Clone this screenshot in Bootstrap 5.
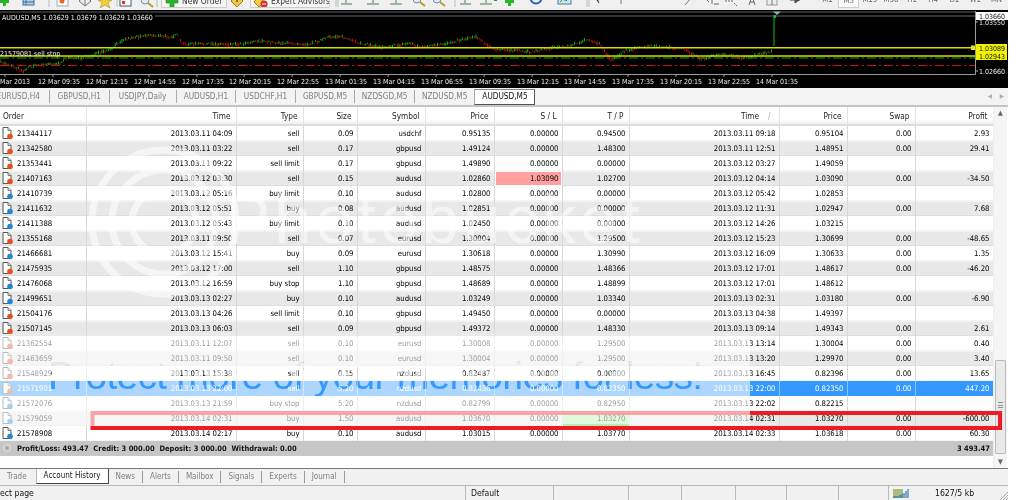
<!DOCTYPE html>
<html lang="en">
<head>
<meta charset="utf-8">
<title>AUDUSD,M5</title>
<link href="https://cdn.jsdelivr.net/npm/bootstrap@5.3.0/dist/css/bootstrap.min.css" rel="stylesheet">
<style>
html,body{margin:0;height:500px;overflow:hidden;background:#fff}
body{font-family:"DejaVu Sans Condensed","DejaVu Sans",sans-serif;font-size:7.7px;color:#000;font-stretch:condensed}
.mt-app{width:1008px;height:500px;filter:blur(.3px);background:#f1f1f1}
/* toolbar */
.mt-tools{height:10px;overflow:hidden;align-items:flex-end;background:#f0f0f0}
.mt-tools svg{display:block;flex:none;height:16px}
.tb-a{width:161px}.tb-b{width:23px}.tb-c{width:485px}
.mt-tools .tb-btn.btn{flex:none;height:14px;margin-bottom:2px;border:1px solid #ccc;border-radius:1px;background:#f6f6f6;padding:0 0 0 20px;font:8.4px/8px "DejaVu Sans Condensed",sans-serif;color:#333;text-align:left;position:relative;white-space:nowrap;overflow:hidden}
.tb-new.btn{width:66px}.tb-exp.btn{width:80px}
.tb-btn svg{position:absolute;left:2px;top:0;height:14px;width:16px}
.tb-tf{flex:none;width:192px;height:16px;padding-left:2px;font-size:7.7px;line-height:11px;color:#666}
.tb-tf span{width:21.5px;height:14px;text-align:center;display:block}
.tb-tf .tf-on{background:#fafafa;border:1px solid #ccc}
/* chart */
.mt-chart{display:block;width:1008px;height:78px;background:#000}
.cht{font-family:"DejaVu Sans Condensed","DejaVu Sans",sans-serif;font-size:7px;fill:#eee}
.cht-k{fill:#111}
/* chart tabs */
.mt-ctabs{height:17px;background:#f3f3f3;border:0;flex-wrap:nowrap}
.mt-ctabs .nav-link,.mt-btabs .nav-link{padding:0;color:#808080;font-size:8.2px;line-height:13px;border:0;border-radius:0;background:none;text-align:center;white-space:nowrap}
.mt-ctabs .nav-item{width:59.6px;height:13px;margin-top:2px;border-right:1px solid #aaa;overflow:hidden}
.mt-ctabs .nav-item.tab-first{width:50px;display:flex;justify-content:flex-end;padding-right:9px}
.mt-ctabs .nav-item.tab-wide{width:67px}
.mt-ctabs .nav-item.tab-last{border-right:0;width:59.5px}
.mt-ctabs .nav-item.tab-on{width:61px;height:16px;margin-top:1px;background:#fff;border:1px solid #555;border-top-color:#888;border-left-color:#aaa}
.mt-ctabs .tab-on .nav-link{color:#111;line-height:13px}
.ct-arrows{color:#aaa;font-size:6px;line-height:15px;gap:8px;padding-right:4px}
/* list */
.mt-list{height:364px;border-top:2px solid #c4c4c4;border-bottom:1px solid #777;background:#fff;position:relative}
.mt-wrap{width:993px;flex:none}
.mt-grid{width:993px;margin:0;table-layout:fixed;border-collapse:collapse}
.mt-grid>thead>tr>th{height:18px;padding:0 5px 2px 3px;font-weight:400;text-align:right;color:#222;font-size:8.2px;background:linear-gradient(#fff 70%,#f0f0f0);border-right:1px solid #e4e4e4;border-bottom:2px solid #dcdcdc;box-shadow:none;white-space:nowrap}
.mt-grid>thead>tr>th:first-child{text-align:left}
.sort-mk{margin:0 3px 0 9px;color:#aaa}
.mt-grid>tbody>tr>td{height:15px;padding:0 3px;line-height:15px;text-align:right;white-space:nowrap;overflow:hidden;background:#fff;color:#000;border:0;border-right:1px solid #d8d8d8;box-shadow:inset 0 -1px 0 #f4f4f4}
.mt-grid>tbody>tr:nth-child(even)>td{background:#e8e8e8;box-shadow:inset 0 1px 0 #f2f2f2,inset 0 -1px 0 #dedede}
.mt-grid>tbody>tr>td:first-child{text-align:left;padding-left:2px}
.mt-grid>tbody>tr>td.c-sl{background:#ff9f9f;box-shadow:inset 0 0 0 1px #fff;color:#000}
.mt-grid>tbody>tr>td.c-tp{background:#b4f2a8;box-shadow:inset 0 0 0 1px #fff}
.mt-grid>tbody>tr>td.c-tpl{background:#b4f2a8;box-shadow:inset 0 -2px 0 #4fce4f}
.mt-grid>tbody>tr.r-sel>td{background:#3399ff;color:#fff;box-shadow:none;border-right-color:#8cc4ff}
.mt-grid>tbody>tr.r-sum>td{background:#c6c6c6;box-shadow:none;border:0;font-weight:700;font-size:7.5px;color:#111;text-align:right}
.mt-grid>tbody>tr.r-sum>td:first-child{text-align:left}
.o-ic{display:inline-block;width:11px;height:14px;vertical-align:top;margin-right:4px}
.o-dot{display:inline-block;width:8px;height:8px;border-radius:50%;background:#aaa;border:2px solid #d4d4d4;vertical-align:-1px;margin:0 6px 0 1px}
.w-o{width:86px}.w-t{width:150px}.w-ty{width:67px}.w-sz{width:54px}.w-sy{width:68px}.w-p{width:69px}.w-sl{width:68px}.w-tp{width:67px}.w-p2{width:68px}.w-sw{width:68px}.w-pr{width:78px}
.mt-scroll{width:14px;flex:none;background:#f5f5f5;border-left:1px solid #eee;color:#666;font-size:7px;line-height:12px;text-align:center}
.sc-thumb{height:94px;margin:0 1px 2px;border:1px solid #bbb;border-radius:1px;background:#e9e9e9;line-height:90px;font-size:8px;color:#777}
.mt-over{position:absolute;left:0;top:-2px;width:1008px;height:364px;pointer-events:none}
.ov-mark{font-family:"Liberation Sans",sans-serif;font-size:68px;fill:#fff;fill-opacity:.5}
.ov-hole{font-family:"Liberation Sans",sans-serif;font-size:39px;fill:#000}
/* bottom tabs */
.mt-btabs{height:16px;background:#f1f1f1;flex-wrap:nowrap;padding-left:7px;border:0}
.mt-btabs .nav-item{flex:none;height:12px;margin-top:2px;padding:0 7px;border-right:1px solid #999}
.mt-btabs .nav-link{line-height:12px;font-size:8px}
.mt-btabs .bt-plain{border:0;padding:0 9px 0 0}
.mt-btabs .bt-on{height:15px;margin-top:0;padding:0 7px;background:#fff;border:1px solid #444;border-top:0;border-left-color:#bbb}
.mt-btabs .bt-on .nav-link{color:#222;line-height:13px}
/* status */
.mt-status{height:15px;border-top:1px solid #b8b8b8;background:#f1f1f1;font-size:8.6px;line-height:14px;color:#111;overflow:hidden}
.mt-status>div{flex:none;height:14px;border-right:1px solid #bbb;padding-left:5px;white-space:nowrap}
.st-a{width:466px}.st-a.px-0{padding-left:0}.st-b{width:88px}.st-c{width:75px}.st-d{width:53px}.st-e{width:54px}.st-f{width:51px}.st-g{width:52px}.st-h{width:50px}
.mt-status>.st-i{width:119px;border:0;padding-left:4px;position:relative}
.st-i svg{display:block;width:16px;height:11px;margin-top:2px}
.st-kb{padding-left:26px}
.st-i .st-grip{position:absolute;right:0;bottom:0;width:9px;height:9px;margin:0}
</style>
</head>
<body>
<div class="mt-app d-flex flex-column">

  <div class="mt-tools d-flex">
    <svg class="tb-a" viewBox="0 -6 161 16" aria-hidden="true">
      <path d="M3-3h3v3h3v3h-3v3h-3v-3h-3v-3h3z" fill="#27b52c"/>
      <rect x="23" y="-3" width="11" height="8" fill="#b9cfe6" stroke="#3d6a99"/><path d="M26-3v8M23 2h11" stroke="#3d6a99"/>
      <path d="M49-6v13M117-6v13M157-6v13" stroke="#bbb"/>
      <rect x="57" y="-4" width="11" height="10" fill="#fff" stroke="#9ab"/><circle cx="62" cy="1" r="2.5" fill="#e8622a"/>
      <path d="M85-4l6 5-6 5-6-5z" fill="#eee" stroke="#777"/><path d="M85-4v10" stroke="#777"/>
      <path d="M105-5l2 5h5l-4 3 2 5-5-3-5 3 2-5-4-3h5z" fill="#f2cf3b" stroke="#b8902a" stroke-width=".6"/>
      <rect x="120" y="-4" width="11" height="10" fill="#fff" stroke="#456"/><path d="M121-1h9" stroke="#3d6cc0" stroke-width="2"/><rect x="122" y="1" width="3" height="3" fill="#d33"/>
      <circle cx="145" cy="0" r="4" fill="#dcecff" stroke="#7a8ca0"/><path d="M148 3l5 4" stroke="#c49a2a" stroke-width="2"/>
    </svg>
    <button type="button" class="btn tb-btn tb-new"><svg viewBox="0 0 16 14" aria-hidden="true"><path d="M6 0h4v4h4v4h-4v4h-4v-4h-4v-4h4z" fill="#27b52c" stroke="#178a1c" stroke-width=".6"/></svg>New Order</button>
    <svg class="tb-b" viewBox="0 -6 23 16" aria-hidden="true">
      <path d="M10-5l6 6-6 6-6-6z" fill="#f0c93a" stroke="#9a7a20"/><path d="M10-2v4" stroke="#634" stroke-width="1.4"/>
    </svg>
    <button type="button" class="btn tb-btn tb-exp"><svg viewBox="0 0 16 14" aria-hidden="true"><path d="M6 1l6 7-6 4-5-5z" fill="#f2cf3b" stroke="#9a7a20"/><circle cx="11" cy="9" r="3.6" fill="#d92b2b"/><path d="M9 9h4" stroke="#fff"/></svg>Expert Advisors</button>
    <svg class="tb-c" viewBox="330 -6 485 16" aria-hidden="true">
      <g stroke="#bbb"><path d="M336-6v13M338-6v13M455-6v13M587-6v13M589-6v13"/></g>
      <g fill="none" stroke="#4a7a4a">
        <path d="M346-5v8M341 4h11"/><path d="M373-5v8M367 4h12"/><path d="M396-5v8M390 4h12"/><path d="M465-5v8M460 4h11"/><path d="M486-5v8M480 4h12"/>
      </g>
      <path d="M371-1h4M494 0h3" stroke="#2a9b2a" stroke-width="2"/>
      <g fill="#dcecff" stroke="#7a8ca0"><circle cx="417" cy="-1" r="4"/><circle cx="437" cy="-1" r="4"/></g>
      <path d="M420 2l5 4M440 2l5 4" stroke="#c49a2a" stroke-width="2"/>
      <path d="M508-3h3v3h3v3h-3v3h-3v-3h-3v-3h3z" fill="#27b52c"/>
      <circle cx="536" cy="-2" r="5.5" fill="none" stroke="#2c62b8" stroke-width="2"/>
      <rect x="558" y="-4" width="13" height="8" fill="#cfe3ee" stroke="#4b7ba0"/><path d="M560 2l3-3 3 2 3-3" stroke="#3a9a4a" fill="none"/>
      <path d="M595-6l4 6-2 0 2 3" fill="#333" stroke="#333"/>
      <path d="M621-4v8M645-4v4" stroke="#777"/>
      <path d="M685 5l6-7" stroke="#777"/>
      <path d="M704-3l5 5M712-3v7M714 4h5" stroke="#666" fill="none"/>
      <path d="M725 1h8M734 3l3 3" stroke="#666" stroke-dasharray="2 1" fill="none"/>
      <path d="M749 5l3-9 3 9M750 2h4" stroke="#666" fill="none"/>
      <rect x="767" y="-4" width="10" height="9" fill="#eee" stroke="#999"/><path d="M772-4v9" stroke="#776"/>
      <path d="M790 0h10M795-3l4 3-4 3z" stroke="#444" fill="#555"/>
    </svg>
    <div class="tb-tf d-flex"><span>M1</span><span class="tf-on">M5</span><span>M15</span><span>M30</span><span>H1</span><span>H4</span><span>D1</span><span>W1</span><span>MN</span></div>
  </div>

  <svg class="mt-chart" viewBox="0 10 1008 78" role="img" aria-label="AUDUSD M5 chart">
    <path d="M0 12H975" stroke="#7b7b7b" stroke-width=".8"/>
    <path d="M155 16H975" stroke="#5a6a74" stroke-width="1.2"/>
    <g id="candles"></g>
    <path d="M774 46V15" stroke="#0ca010" stroke-width="1.2"/>
    <path d="M774 18h2v-3h-2z" fill="#15c41a"/>
    <path d="M773 11.5h8l-4 3.5z" fill="#9aa"/>
    <path d="M0 58H975" stroke="#0aa00a" stroke-width="1" stroke-dasharray="9 3 2 3"/>
    <path d="M0 65.5H975" stroke="#c01818" stroke-width="1" stroke-dasharray="9 3 2 3"/>
    <path d="M0 47.7H975M0 56H975" stroke="#d8d800" stroke-width="1.6"/>
    <rect x="971" y="45.500" width="5" height="4.500" fill="#e8e800"/>
    <path d="M975.500 11V74.500H0" fill="none" stroke="#9a9a9a"/>
    <path d="M975 16h3M975 22h3M975 71h3" stroke="#aaa"/>
    <g stroke="#999"><path d="M5 74v3M53 74v3M101 74v3M149 74v3M197 74v3M244 74v3M292 74v3M340 74v3M388 74v3M436 74v3M484 74v3M532 74v3M579 74v3M628 74v3M676 74v3M724 74v3M772 74v3"/></g>
    <text class="cht" x="2" y="20">AUDUSD,M5  1.03629 1.03679 1.03629 1.03660</text>
    <text class="cht" x="0" y="56">21579081 sell stop</text>
    <rect x="976" y="12" width="32" height="8" fill="#fff"/>
    <text class="cht cht-k" x="979" y="18.500">1.03660</text>
    <text class="cht" x="979" y="25">1.03550</text>
    <rect x="976" y="44" width="31" height="16" fill="#f2f200"/>
    <text class="cht cht-k" x="979" y="50.500">1.03089</text>
    <text class="cht cht-k" x="979" y="59">1.02943</text>
    <text class="cht" x="979" y="74">1.02660</text>
    <g>
      <text class="cht" x="0" y="84">Mar 2013</text><text class="cht" x="38" y="84">12 Mar 09:35</text><text class="cht" x="86" y="84">12 Mar 12:15</text><text class="cht" x="134" y="84">12 Mar 14:55</text><text class="cht" x="182" y="84">12 Mar 17:35</text><text class="cht" x="229" y="84">12 Mar 20:15</text><text class="cht" x="277" y="84">12 Mar 22:55</text><text class="cht" x="325" y="84">13 Mar 01:35</text><text class="cht" x="373" y="84">13 Mar 04:15</text><text class="cht" x="421" y="84">13 Mar 06:55</text><text class="cht" x="469" y="84">13 Mar 09:35</text><text class="cht" x="517" y="84">13 Mar 12:15</text><text class="cht" x="564" y="84">13 Mar 14:55</text><text class="cht" x="612" y="84">13 Mar 17:35</text><text class="cht" x="660" y="84">13 Mar 20:15</text><text class="cht" x="708" y="84">13 Mar 22:55</text><text class="cht" x="756" y="84">14 Mar 01:35</text>
    </g>
  </svg>

  <ul class="nav mt-ctabs">
    <li class="nav-item tab-first"><a class="nav-link" href="#">EURUSD,H4</a></li>
    <li class="nav-item"><a class="nav-link" href="#">GBPUSD,H1</a></li>
    <li class="nav-item tab-wide"><a class="nav-link" href="#">USDJPY,Daily</a></li>
    <li class="nav-item"><a class="nav-link" href="#">AUDUSD,H1</a></li>
    <li class="nav-item"><a class="nav-link" href="#">USDCHF,H1</a></li>
    <li class="nav-item"><a class="nav-link" href="#">GBPUSD,M5</a></li>
    <li class="nav-item"><a class="nav-link" href="#">NZDSGD,M5</a></li>
    <li class="nav-item tab-last"><a class="nav-link" href="#">NZDUSD,M5</a></li>
    <li class="nav-item tab-on"><a class="nav-link active" href="#">AUDUSD,M5</a></li>
    <li class="ms-auto d-flex ct-arrows"><span>&#9664;</span><span>&#9654;</span></li>
  </ul>

  <svg width="0" height="0" class="position-absolute" aria-hidden="true">
    <symbol id="doc-r" viewBox="0 0 11 14"><path d="M1 1.500h5l3 3v8h-8z" fill="#fff" stroke="#555"/><path d="M6 1.500v3h3" fill="#ddd" stroke="#777"/><circle cx="8" cy="10.500" r="2.800" fill="#e4511f"/></symbol>
    <symbol id="doc-b" viewBox="0 0 11 14"><path d="M1 1.500h5l3 3v8h-8z" fill="#fff" stroke="#555"/><path d="M6 1.500v3h3" fill="#ddd" stroke="#777"/><circle cx="8" cy="10.500" r="2.800" fill="#1f86d8"/></symbol>
  </svg>

  <div class="mt-list d-flex">
    <div class="mt-wrap">
      <table class="table mt-grid">
        <colgroup><col class="w-o"><col class="w-t"><col class="w-ty"><col class="w-sz"><col class="w-sy"><col class="w-p"><col class="w-sl"><col class="w-tp"><col class="w-t"><col class="w-p2"><col class="w-sw"><col class="w-pr"></colgroup>
        <thead><tr><th>Order</th><th>Time</th><th>Type</th><th>Size</th><th>Symbol</th><th>Price</th><th>S / L</th><th>T / P</th><th>Time<span class="sort-mk">/</span></th><th>Price</th><th>Swap</th><th>Profit</th></tr></thead>
        <tbody>
<tr><td><svg class="o-ic"><use href="#doc-r"/></svg>21344117</td><td>2013.03.11 04:09</td><td>sell</td><td>0.09</td><td>usdchf</td><td>0.95135</td><td>0.00000</td><td>0.94500</td><td>2013.03.11 09:18</td><td>0.95104</td><td>0.00</td><td>2.93</td></tr>
<tr><td><svg class="o-ic"><use href="#doc-r"/></svg>21342580</td><td>2013.03.11 03:22</td><td>sell</td><td>0.17</td><td>gbpusd</td><td>1.49124</td><td>0.00000</td><td>1.48300</td><td>2013.03.11 12:51</td><td>1.48951</td><td>0.00</td><td>29.41</td></tr>
<tr><td><svg class="o-ic"><use href="#doc-r"/></svg>21353441</td><td>2013.03.11 09:22</td><td>sell limit</td><td>0.17</td><td>gbpusd</td><td>1.49890</td><td>0.00000</td><td>0.00000</td><td>2013.03.12 03:27</td><td>1.49059</td><td></td><td></td></tr>
<tr><td><svg class="o-ic"><use href="#doc-r"/></svg>21407163</td><td>2013.03.12 03:30</td><td>sell</td><td>0.15</td><td>audusd</td><td>1.02860</td><td class="c-sl">1.03090</td><td>1.02700</td><td>2013.03.12 04:14</td><td>1.03090</td><td>0.00</td><td>-34.50</td></tr>
<tr><td><svg class="o-ic"><use href="#doc-b"/></svg>21410739</td><td>2013.03.12 05:16</td><td>buy limit</td><td>0.10</td><td>audusd</td><td>1.02800</td><td>0.00000</td><td>0.00000</td><td>2013.03.12 05:42</td><td>1.02853</td><td></td><td></td></tr>
<tr><td><svg class="o-ic"><use href="#doc-b"/></svg>21411632</td><td>2013.03.12 05:51</td><td>buy</td><td>0.08</td><td>audusd</td><td>1.02851</td><td>0.00000</td><td>0.00000</td><td>2013.03.12 11:31</td><td>1.02947</td><td>0.00</td><td>7.68</td></tr>
<tr><td><svg class="o-ic"><use href="#doc-b"/></svg>21411388</td><td>2013.03.12 05:43</td><td>buy limit</td><td>0.10</td><td>audusd</td><td>1.02450</td><td>0.00000</td><td>0.00000</td><td>2013.03.12 14:26</td><td>1.03215</td><td></td><td></td></tr>
<tr><td><svg class="o-ic"><use href="#doc-r"/></svg>21355168</td><td>2013.03.11 09:50</td><td>sell</td><td>0.07</td><td>eurusd</td><td>1.30004</td><td>0.00000</td><td>1.29500</td><td>2013.03.12 15:23</td><td>1.30699</td><td>0.00</td><td>-48.65</td></tr>
<tr><td><svg class="o-ic"><use href="#doc-b"/></svg>21466681</td><td>2013.03.12 15:41</td><td>buy</td><td>0.09</td><td>eurusd</td><td>1.30618</td><td>0.00000</td><td>1.30990</td><td>2013.03.12 16:09</td><td>1.30633</td><td>0.00</td><td>1.35</td></tr>
<tr><td><svg class="o-ic"><use href="#doc-r"/></svg>21475935</td><td>2013.03.12 17:00</td><td>sell</td><td>1.10</td><td>gbpusd</td><td>1.48575</td><td>0.00000</td><td>1.48366</td><td>2013.03.12 17:01</td><td>1.48617</td><td>0.00</td><td>-46.20</td></tr>
<tr><td><svg class="o-ic"><use href="#doc-b"/></svg>21476068</td><td>2013.03.12 16:59</td><td>buy stop</td><td>1.10</td><td>gbpusd</td><td>1.48689</td><td>0.00000</td><td>1.48899</td><td>2013.03.12 17:01</td><td>1.48612</td><td></td><td></td></tr>
<tr><td><svg class="o-ic"><use href="#doc-b"/></svg>21499651</td><td>2013.03.13 02:27</td><td>buy</td><td>0.10</td><td>audusd</td><td>1.03249</td><td>0.00000</td><td>1.03340</td><td>2013.03.13 02:31</td><td>1.03180</td><td>0.00</td><td>-6.90</td></tr>
<tr><td><svg class="o-ic"><use href="#doc-r"/></svg>21504176</td><td>2013.03.13 04:26</td><td>sell limit</td><td>0.10</td><td>gbpusd</td><td>1.49450</td><td>0.00000</td><td>0.00000</td><td>2013.03.13 04:38</td><td>1.49397</td><td></td><td></td></tr>
<tr><td><svg class="o-ic"><use href="#doc-r"/></svg>21507145</td><td>2013.03.13 06:03</td><td>sell</td><td>0.09</td><td>gbpusd</td><td>1.49372</td><td>0.00000</td><td>1.48330</td><td>2013.03.13 09:14</td><td>1.49343</td><td>0.00</td><td>2.61</td></tr>
<tr><td><svg class="o-ic"><use href="#doc-r"/></svg>21362554</td><td>2013.03.11 12:07</td><td>sell</td><td>0.10</td><td>eurusd</td><td>1.30008</td><td>0.00000</td><td>1.29500</td><td>2013.03.13 13:14</td><td>1.30004</td><td>0.00</td><td>0.40</td></tr>
<tr><td><svg class="o-ic"><use href="#doc-r"/></svg>21463659</td><td>2013.03.11 09:50</td><td>sell</td><td>0.10</td><td>eurusd</td><td>1.30004</td><td>0.00000</td><td>1.29500</td><td>2013.03.13 13:20</td><td>1.29970</td><td>0.00</td><td>3.40</td></tr>
<tr><td><svg class="o-ic"><use href="#doc-r"/></svg>21548929</td><td>2013.03.13 15:38</td><td>sell</td><td>0.15</td><td>nzdusd</td><td>0.82487</td><td>0.00000</td><td>0.00000</td><td>2013.03.13 16:45</td><td>0.82396</td><td>0.00</td><td>13.65</td></tr>
<tr class="r-sel"><td><svg class="o-ic"><use href="#doc-r"/></svg>21571901</td><td>2013.03.13 22:00</td><td>sell</td><td>5.20</td><td>nzdusd</td><td>0.82436</td><td>0.00000</td><td class="c-tp">0.82350</td><td>2013.03.13 22:00</td><td>0.82350</td><td>0.00</td><td>447.20</td></tr>
<tr><td><svg class="o-ic"><use href="#doc-b"/></svg>21572076</td><td>2013.03.13 21:59</td><td>buy stop</td><td>5.20</td><td>nzdusd</td><td>0.82799</td><td>0.00000</td><td>0.82950</td><td>2013.03.13 22:02</td><td>0.82215</td><td></td><td></td></tr>
<tr><td><svg class="o-ic"><use href="#doc-b"/></svg>21579059</td><td>2013.03.14 02:31</td><td>buy</td><td>1.50</td><td>audusd</td><td>1.03670</td><td>0.00000</td><td class="c-tpl">1.03270</td><td>2013.03.14 02:31</td><td>1.03270</td><td>0.00</td><td>-600.00</td></tr>
<tr><td><svg class="o-ic"><use href="#doc-b"/></svg>21578908</td><td>2013.03.14 02:17</td><td>buy</td><td>0.10</td><td>audusd</td><td>1.03015</td><td>0.00000</td><td>1.03770</td><td>2013.03.14 02:33</td><td>1.03618</td><td>0.00</td><td>60.30</td></tr>
<tr class="r-sum"><td colspan="11"><span class="o-dot"></span>Profit/Loss: 493.47 &nbsp;Credit: 3 000.00 &nbsp;Deposit: 3 000.00 &nbsp;Withdrawal: 0.00</td><td>3 493.47</td></tr>
        </tbody>
      </table>
    </div>
    <div class="mt-scroll d-flex flex-column">
      <div>&#9650;</div>
      <div class="flex-grow-1"></div>
      <div class="sc-thumb">&#9776;</div>
      <div>&#9660;</div>
    </div>
    <svg class="mt-over" viewBox="0 105 1008 364" aria-hidden="true">
      <defs>
        <linearGradient id="ov-fade" x1="0" y1="333" x2="0" y2="426" gradientUnits="userSpaceOnUse">
          <stop offset="0" stop-color="#fff" stop-opacity="0"/><stop offset=".05" stop-color="#fff" stop-opacity=".6"/><stop offset="1" stop-color="#fff" stop-opacity=".6"/>
        </linearGradient>
        <mask id="ov-mask" maskUnits="userSpaceOnUse" x="0" y="105" width="1008" height="364">
          <rect x="0" y="105" width="1008" height="364" fill="#fff"/>
          <text class="ov-hole" x="48" y="389" textLength="655" lengthAdjust="spacing">Protect more of your memories for less!</text>
        </mask>
      </defs>
      <g fill="none" stroke="#fff" stroke-opacity=".55" stroke-width="7">
        <circle cx="164" cy="222" r="72"/><circle cx="164" cy="222" r="52"/><circle cx="164" cy="222" r="32"/>
      </g>
      <text class="ov-mark" x="225" y="243" textLength="415" lengthAdjust="spacing">Photobucket</text>
      <rect x="92.500" y="413" width="907.500" height="15" fill="none" stroke="#ed1c24" stroke-width="4"/>
      <rect x="0" y="333" width="750" height="93" fill="url(#ov-fade)" mask="url(#ov-mask)"/>
    </svg>
  </div>

  <ul class="nav mt-btabs">
    <li class="nav-item bt-plain"><a class="nav-link" href="#">Trade</a></li>
    <li class="nav-item bt-on"><a class="nav-link active" href="#">Account History</a></li>
    <li class="nav-item"><a class="nav-link" href="#">News</a></li>
    <li class="nav-item"><a class="nav-link" href="#">Alerts</a></li>
    <li class="nav-item"><a class="nav-link" href="#">Mailbox</a></li>
    <li class="nav-item"><a class="nav-link" href="#">Signals</a></li>
    <li class="nav-item"><a class="nav-link" href="#">Experts</a></li>
    <li class="nav-item"><a class="nav-link" href="#">Journal</a></li>
  </ul>

  <div class="mt-status d-flex">
    <div class="st-a px-0">ect page</div>
    <div class="st-b">Default</div>
    <div class="st-c"></div><div class="st-d"></div><div class="st-e"></div><div class="st-f"></div><div class="st-g"></div><div class="st-h"></div>
    <div class="st-i d-flex">
      <svg viewBox="0 0 16 11" aria-hidden="true"><path d="M1 10V1M3 10V1M5 10V1M7 10V1M9 10V1" stroke="#6f8f2a" stroke-width="1.100"/><path d="M1 10V8M3 10V8M5 10V8M7 10V7M9 10V6M11 10V5M13 10V3M15 10V1" stroke="#1f6fa8" stroke-width="1.100"/></svg>
      <span class="st-kb">1627/5 kb</span>
      <svg class="st-grip" viewBox="0 0 9 9" aria-hidden="true"><path d="M9 1L1 9M9 4L4 9M9 7L7 9" stroke="#aaa"/></svg>
    </div>
  </div>
</div>
<script src="https://cdn.jsdelivr.net/npm/bootstrap@5.3.0/dist/js/bootstrap.bundle.min.js"></script>
<script>
(function(){
  var p=[[0,62],[10,65],[24,71],[30,66],[40,65],[60,63],[66,58],[80,58],[100,53],[110,50],[122,40],[140,36],[150,35],[170,37],[178,35],[182,44],[200,44],[240,44],[256,41],[280,43],[310,44],[330,37],[340,36],[355,42],[380,47],[400,45],[410,43],[420,47],[440,45],[460,40],[476,36],[485,43],[495,50],[511,50],[530,52],[550,48],[570,46],[585,40],[600,44],[611,60],[627,50],[651,46],[684,49],[701,59],[724,54],[744,58],[771,52],[773,50]];
  var s=7,g=document.getElementById('candles'),d1='',d2='';
  function r(){s=(s*16807)%2147483647;return s/2147483647;}
  function at(x){for(var i=1;i<p.length;i++){if(x<=p[i][0]){var a=p[i-1],b=p[i];return a[1]+(b[1]-a[1])*(x-a[0])/(b[0]-a[0]);}}return 50;}
  var prev=at(0);
  for(var x=0;x<773;x+=1.67){
    var y=at(x)+(r()-.5)*2,up=y<prev;
    var h=.5+r()*1.5,seg='M'+x.toFixed(1)+' '+(y-h).toFixed(1)+'V'+(y+h).toFixed(1);
    if(up)d1+=seg;else d2+=seg;
    prev=y;
  }
  g.innerHTML='<path d="'+d1+'" stroke="#12b012" stroke-width="1"/><path d="'+d2+'" stroke="#c01010" stroke-width="1"/>';
})();
</script>
</body>
</html>
